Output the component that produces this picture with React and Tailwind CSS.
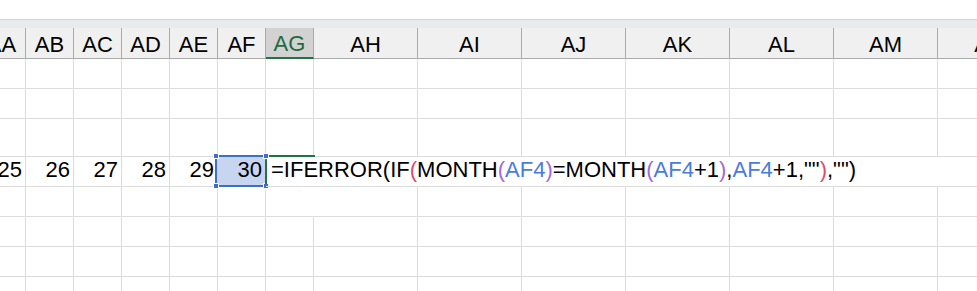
import React from "react";

const columns = [
    { name: "AA", width: "w-[48px]" },
    { name: "AB", width: "w-[48px]" },
    { name: "AC", width: "w-[48px]" },
    { name: "AD", width: "w-[48px]" },
    { name: "AE", width: "w-[48px]" },
    { name: "AF", width: "w-[48px]" },
    { name: "AG", width: "w-[48px]" },
    { name: "AH", width: "w-[104px]" },
    { name: "AI", width: "w-[104px]" },
    { name: "AJ", width: "w-[104px]" },
    { name: "AK", width: "w-[104px]" },
    { name: "AL", width: "w-[104px]" },
    { name: "AM", width: "w-[104px]" },
    { name: "AN", width: "w-[104px]" },
];

const rows = [
    { id: 1, height: "h-[30px]" },
    { id: 2, height: "h-[30px]" },
    { id: 3, height: "h-[38px]" },
    { id: 4, height: "h-[30px]" },
    { id: 5, height: "h-[30px]" },
    { id: 6, height: "h-[30px]" },
    { id: 7, height: "h-[30px]" },
    { id: 8, height: "h-[30px]" },
];

const days = { AA: "25", AB: "26", AC: "27", AD: "28", AE: "29", AF: "30" };
const wide = ["AG", "AH", "AI", "AJ", "AK", "AL", "AM", "AN"];

function Formula() {
    const red = "text-[#e24a6e]";
    const purple = "text-[#a866d6]";
    const blue = "text-[#4a7be0]";
    return (
        <span className="whitespace-nowrap text-black">
            =IFERROR(IF<span className={red}>(</span>MONTH
            <span className={purple}>(</span>
            <span className={blue}>AF4</span>
            <span className={purple}>)</span>=MONTH
            <span className={purple}>(</span>
            <span className={blue}>AF4</span>+1
            <span className={purple}>)</span>,
            <span className={blue}>AF4</span>+1,{'""'}
            <span className={red}>)</span>,{'"")'}
        </span>
    );
}

function Handle({ pos }) {
    return (
        <div
            className={`absolute w-[6px] h-[6px] bg-[#3b6fcb] border border-white ${pos}`}
        />
    );
}

function DataCell({ col, row }) {
    const noRight =
        (row === 4 && wide.includes(col.name)) || (row === 5 && col.name === "AG");
    const base = `relative ${col.width} shrink-0 h-full border-b border-[#dcdcdc] ${
        noRight ? "" : "border-r"
    }`;

    if (row === 4 && days[col.name]) {
        return (
            <div className={`${base} flex items-end justify-end pr-[3px]`}>
                {col.name === "AF" && (
                    <div className="absolute -left-[3px] -right-[2px] -top-[2px] -bottom-[1px] border-2 border-[#3b6fcb] bg-[#c7d5f0] z-10">
                        <Handle pos="-left-[4px] -top-[4px]" />
                        <Handle pos="-right-[4px] -top-[4px]" />
                        <Handle pos="-left-[4px] -bottom-[4px]" />
                        <Handle pos="-right-[4px] -bottom-[4px]" />
                    </div>
                )}
                <span className="relative z-20 text-black">{days[col.name]}</span>
            </div>
        );
    }

    if (row === 4 && col.name === "AG") {
        return (
            <div className={`${base} flex items-end pl-[5px] z-20`}>
                <div className="absolute left-[3px] -top-[2px] w-[46px] h-[2px] bg-[#217346]" />
                <div className="absolute -left-[1px] top-[3px] w-[2px] h-[24px] bg-[#217346]" />
                <Formula />
            </div>
        );
    }

    return <div className={base} />;
}

export default function App() {
    return (
        <div className="relative w-[977px] h-[291px] overflow-hidden bg-white font-['Liberation_Sans',Arial,sans-serif] text-[22px]">
            <div className="h-[19px]" />
            <div className="h-px bg-[#d3d3d3]" />
            <div className="h-[8px] bg-[#e8eaed]" />

            <div className="-ml-[22px]">
                <div className="flex h-[31px] bg-[#f0f0f0]">
                    {columns.map((col) =>
                        col.name === "AG" ? (
                            <div
                                key={col.name}
                                className={`${col.width} shrink-0 flex items-center justify-center pt-[2px] bg-[#d2d2d2] text-[#1e6b41] border-r border-[#ababab] border-b-2 border-b-[#217346]`}
                            >
                                {col.name}
                            </div>
                        ) : (
                            <div
                                key={col.name}
                                className={`${col.width} shrink-0 flex items-center justify-center pt-[2px] text-black border-r border-b border-[#ababab]`}
                            >
                                {col.name}
                            </div>
                        )
                    )}
                </div>

                {rows.map((row) => (
                    <div key={row.id} className={`flex ${row.height}`}>
                        {columns.map((col) => (
                            <DataCell key={col.name} col={col} row={row.id} />
                        ))}
                    </div>
                ))}
            </div>
        </div>
    );
}
